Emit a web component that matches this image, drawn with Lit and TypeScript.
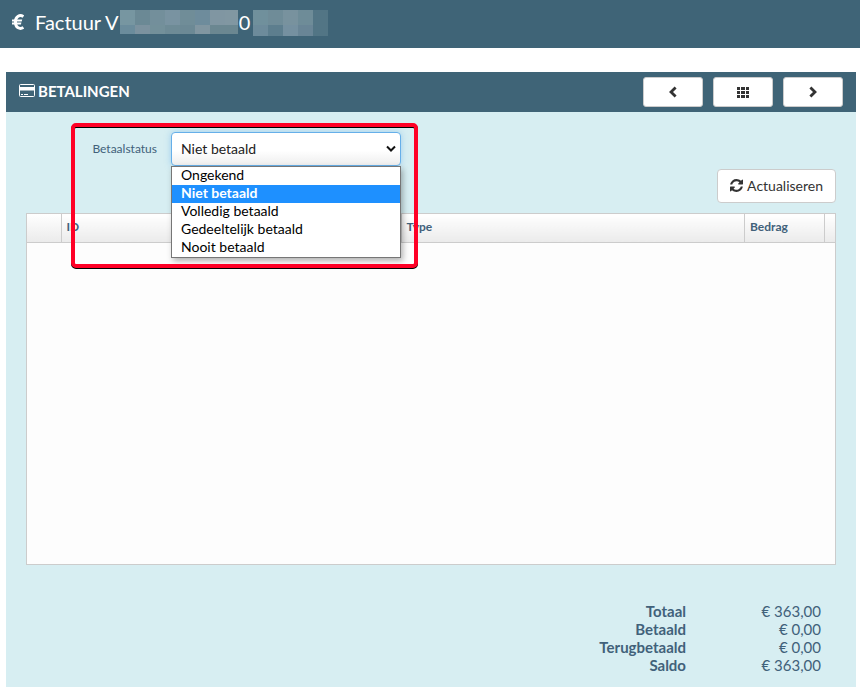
import { LitElement, html, css, svg } from "lit";
import { customElement, state } from "lit/decorators.js";
import { classMap } from "lit/directives/class-map.js";

const STATUSES = [
  "Ongekend",
  "Niet betaald",
  "Volledig betaald",
  "Gedeeltelijk betaald",
  "Nooit betaald",
];

const TOTALS: [string, string][] = [
  ["Totaal", "€ 363,00"],
  ["Betaald", "€ 0,00"],
  ["Terugbetaald", "€ 0,00"],
  ["Saldo", "€ 363,00"],
];

// Mosaic colours, row by row, that hide the invoice number.
const MASK_LONG = [
  ["#7796a1", "#6b8995", "#738f9b", "#7993a1", "#708d98", "#6e8c9c", "#8096a2", "#8197a2"],
  ["#6b8c9c", "#7c929f", "#73909a", "#6e8b96", "#6c8995", "#8196a1", "#6b8791", "#6b8791"],
];
const MASK_SHORT = [
  ["#70909c", "#6f8c98", "#78929e", "#6e8c98", "#527585"],
  ["#6d8b9b", "#5d7e8e", "#7590a0", "#698596", "#527585"],
];

const mosaic = (rows: string[][], width: number, height: number) => html`
  <svg class="mask" width=${width} height=${height} shape-rendering="crispEdges" aria-hidden="true">
    ${rows.map((row, y) =>
      row.map(
        (fill, x) => svg`<rect x=${x * 15} y=${y * 15} width="15" height="15" fill=${fill}></rect>`
      )
    )}
  </svg>
`;

@customElement("app-root")
export class AppRoot extends LitElement {
  @state() private status = "Niet betaald";

  static styles = css`
    :host {
      display: block;
      font-family: Lato, "Open Sans", sans-serif;
      font-size: 14px;
      color: #41617a;
    }
    * {
      box-sizing: border-box;
    }
    .topbar {
      display: flex;
      align-items: flex-start;
      height: 48px;
      padding: 10px 12px;
      background: #3f6477;
      color: #fff;
    }
    .topbar .euro {
      margin: 4px 11px 0 0;
    }
    h1 {
      display: flex;
      gap: 1px;
      margin: 0;
      font-size: 20px;
      line-height: 24px;
      font-weight: 400;
    }
    .mask {
      display: block;
      flex: none;
    }
    h1 .mask:last-child {
      margin-left: 2px;
    }
    .panel {
      margin: 24px 4px 0 6px;
      background: #d7eef2;
    }
    .panel-head {
      display: flex;
      align-items: center;
      height: 40px;
      padding: 0 13px;
      background: #3f6477;
      color: #fff;
    }
    h2 {
      flex: 1;
      display: flex;
      align-items: center;
      gap: 2px;
      margin: 0;
      padding-bottom: 2px;
      font-size: 15px;
      line-height: 20px;
      font-weight: 700;
    }
    .nav {
      display: flex;
      gap: 10px;
    }
    button {
      display: flex;
      align-items: center;
      justify-content: center;
      padding: 0;
      border: 1px solid #ccc;
      border-radius: 4px;
      background: #fff;
      color: #333;
      font: inherit;
      cursor: pointer;
    }
    .nav button {
      width: 60px;
      height: 30px;
      border-radius: 3px;
    }
    .panel-body {
      padding: 20px 20px 13px;
    }
    .field {
      position: relative;
      display: flex;
      align-items: center;
      gap: 14px;
      width: 375px;
    }
    .field label {
      flex: 1;
      padding-bottom: 2px;
      text-align: right;
      font-size: 12px;
    }
    .control {
      position: relative;
      width: 230px;
    }
    select {
      display: block;
      width: 100%;
      height: 34px;
      padding: 0 9px 2px;
      border: 1px solid #66afe9;
      border-radius: 4px;
      outline: none;
      appearance: none;
      background: linear-gradient(#fff 55%, #eee);
      box-shadow: 0 0 6px rgba(102, 175, 233, 0.5);
      color: #222;
      font: inherit;
    }
    .caret {
      position: absolute;
      right: 5px;
      top: 13px;
      pointer-events: none;
    }
    .list {
      position: absolute;
      z-index: 2;
      top: 100%;
      left: 0;
      right: 0;
      margin: 0;
      padding: 0;
      border: 1px solid #767676;
      background: #fff;
      box-shadow: 2px 3px 6px rgba(0, 0, 0, 0.3);
      list-style: none;
      color: #000;
    }
    .list li {
      padding: 0 9px 2px;
      line-height: 16px;
    }
    .list li.on {
      background: #1e90ff;
      color: #fff;
      font-weight: 700;
    }
    .frame {
      position: absolute;
      z-index: 3;
      top: -9px;
      left: 45px;
      right: -17px;
      height: 145px;
      border: 4px solid #ff0026;
      border-radius: 5px;
      filter: drop-shadow(0 1px 0 #000);
      pointer-events: none;
    }
    .actions {
      display: flex;
      justify-content: flex-end;
      padding: 3px 0 10px;
    }
    .actions button {
      gap: 4px;
      height: 34px;
      padding: 0 12px 2px;
    }
    .grid {
      min-height: 352px;
      border: 1px solid #ccc;
      background: #fdfdfd;
    }
    .grid table {
      width: 100%;
      table-layout: fixed;
      border-collapse: collapse;
    }
    .grid th {
      height: 28px;
      padding: 0 5px 1px;
      border-right: 1px solid #ccc;
      border-bottom: 1px solid #ccc;
      background: linear-gradient(#fff, #ebebeb);
      text-align: left;
      font-size: 12px;
      line-height: 16px;
      font-weight: 700;
    }
    .grid th:last-child {
      border-right: 0;
    }
    .c-pick {
      width: 34px;
    }
    .c-id {
      width: 340px;
    }
    .c-amount {
      width: 80px;
    }
    .c-end {
      width: 10px;
    }
    .totals {
      margin: 37px 15px 0 auto;
      border-collapse: collapse;
      font-size: 15px;
      line-height: 18px;
      text-align: right;
    }
    .totals th,
    .totals td {
      padding: 0;
    }
    .totals th {
      font-weight: 700;
    }
    .totals td {
      width: 135px;
    }
  `;

  private pick(value: string) {
    this.status = value;
  }

  render() {
    return html`
      <header class="topbar">
        <svg class="euro" width="12" height="16" viewBox="0 0 12 16" aria-hidden="true">
          <path
            d="M11.4 2.6C8 .4 3.4 2 3.4 8s4.6 7.6 8 5.4"
            fill="none" stroke="#fff" stroke-width="3"
          ></path>
          <path d="M0 5.5h10.2l-.5 2H0zM0 8.500h9.400l-.5 2H0z" fill="#fff"></path>
        </svg>
        <h1>Factuur V${mosaic(MASK_LONG, 118, 24)}<span>0</span>${mosaic(MASK_SHORT, 75, 26)}</h1>
      </header>

      <section class="panel">
        <div class="panel-head">
          <h2>
            <svg width="17" height="14" viewBox="0 0 17 14" aria-hidden="true">
              <rect x=".5" y=".5" width="15" height="12" rx="1" fill="none" stroke="#fff"></rect>
              <path d="M1 3h15v3.5H1zM2 10h2v1H2zM5 10h4v1H5z" fill="#fff"></path>
            </svg>
            BETALINGEN
          </h2>
          <div class="nav">
            <button type="button" aria-label="Vorige">
              <svg width="10" height="12" viewBox="0 0 10 12">
                <path d="M7.6 1.4 3 6l4.6 4.6" fill="none" stroke="#333" stroke-width="2.8"></path>
              </svg>
            </button>
            <button type="button" aria-label="Overzicht">
              <svg width="12" height="12" viewBox="0 0 12 12">
                <path
                  d="M0 1h3v3H0zM4 1h4v3H4zM9 1h3v3H9zM0 5h3v3H0zM4 5h4v3H4zM9 5h3v3H9zM0 9h3v3H0zM4 9h4v3H4zM9 9h3v3H9z"
                  fill="#333"
                ></path>
              </svg>
            </button>
            <button type="button" aria-label="Volgende">
              <svg width="10" height="12" viewBox="0 0 10 12">
                <path d="M2.4 1.4 7 6l-4.6 4.6" fill="none" stroke="#333" stroke-width="2.8"></path>
              </svg>
            </button>
          </div>
        </div>

        <div class="panel-body">
          <div class="field">
            <label for="status">Betaalstatus</label>
            <div class="control">
              <select
                id="status"
                .value=${this.status}
                @change=${(e: Event) => this.pick((e.target as HTMLSelectElement).value)}
              >
                ${STATUSES.map((s) => html`<option ?selected=${s === this.status}>${s}</option>`)}
              </select>
              <svg class="caret" width="10" height="8" viewBox="0 0 10 8" aria-hidden="true">
                <path d="M1 1.5 5 5.5l4-4" fill="none" stroke="#111" stroke-width="2"></path>
              </svg>
              <ul class="list" role="listbox" aria-label="Betaalstatus">
                ${STATUSES.map(
                  (s) => html`<li
                    role="option"
                    aria-selected=${s === this.status}
                    class=${classMap({ on: s === this.status })}
                    @click=${() => this.pick(s)}
                  >${s}</li>`
                )}
              </ul>
            </div>
            <div class="frame"></div>
          </div>

          <div class="actions">
            <button type="button">
              <svg width="13" height="13" viewBox="0 0 1536 1536" fill="#333" aria-hidden="true">
                <path
                  d="M1511 928q0 5-1 7-64 268-268 434.500T764 1536q-146 0-282.500-55T238 1324l-129 129q-19 19-45 19t-45-19-19-45V960q0-26 19-45t45-19h448q26 0 45 19t19 45-19 45l-137 137q71 66 161 102t187 36q134 0 250-65t186-179q11-17 53-117 8-23 30-23h192q13 0 22.500 9.500t9.500 22.500zm25-800v448q0 26-19 45t-45 19h-448q-26 0-45-19t-19-45 19-45l138-138Q969 256 768 256q-134 0-250 65T332 500q-11 17-53 117-8 23-30 23H50q-13 0-22.500-9.500T18 608v-7q65-268 270-434.500T768 0q146 0 284 55.500T1297 212l130-129q19-19 45-19t45 19 19 45z"
                ></path>
              </svg>
              Actualiseren
            </button>
          </div>

          <div class="grid">
            <table>
              <thead>
                <tr>
                  <th class="c-pick" scope="col"></th>
                  <th class="c-id" scope="col">ID</th>
                  <th scope="col">Type</th>
                  <th class="c-amount" scope="col">Bedrag</th>
                  <th class="c-end" scope="col"></th>
                </tr>
              </thead>
            </table>
          </div>

          <table class="totals">
            <tbody>
              ${TOTALS.map(
                ([name, amount]) => html`<tr><th scope="row">${name}</th><td>${amount}</td></tr>`
              )}
            </tbody>
          </table>
        </div>
      </section>
    `;
  }
}
